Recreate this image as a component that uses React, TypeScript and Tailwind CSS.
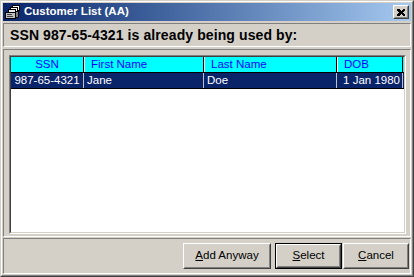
import type { ReactNode } from "react";

const ui = { fontFamily: '"Liberation Sans", Arial, sans-serif' };

type Column = { label: string; width: string; head: string; cell: string };

const columns: Column[] = [
  { label: "SSN", width: "w-[73px]", head: "justify-center", cell: "justify-center" },
  { label: "First Name", width: "w-[120px]", head: "pl-[6px]", cell: "pl-[3px]" },
  { label: "Last Name", width: "w-[133px]", head: "pl-[6px]", cell: "pl-[3px]" },
  { label: "DOB", width: "w-[66px]", head: "pl-[6px]", cell: "justify-end pr-[2px]" },
];

const row = ["987-65-4321", "Jane", "Doe", "1 Jan 1980"];

const CardFileIcon = () => (
  <svg width="16" height="16" viewBox="0 0 16 16" shapeRendering="crispEdges">
    <path d="M7.5 1.5h7v5h-7z" fill="#fff" stroke="#000" />
    <path d="M5.5 3.5h7v5h-7z" fill="#fff" stroke="#000" />
    <path d="M3.5 5.5h7v5h-7z" fill="#e8e8e8" stroke="#000" />
    <path d="M0.5 8.5h10v6h-10z" fill="#c0c0c0" stroke="#000" />
    <path d="M2 10.5h5M2 12.5h6" stroke="#404040" />
    <path d="M10.5 8.5l3-2v6l-3 2" fill="#808080" stroke="#000" />
  </svg>
);

const CloseButton = () => (
  <div className="ml-auto mr-[2px] border border-t-white border-l-white border-r-[#404040] border-b-[#404040]">
    <div className="flex h-[12px] w-[14px] items-center justify-center border border-t-[#d4d0c8] border-l-[#d4d0c8] border-r-[#808080] border-b-[#808080] bg-[#d4d0c8]">
      <svg width="8" height="7" viewBox="0 0 8 7" shapeRendering="crispEdges">
        <path d="M0 0h2l2 2 2-2h2v1l-2 2.5 2 2.5v1h-2l-2-2-2 2h-2v-1l2-2.5-2-2.5z" fill="#000" />
      </svg>
    </div>
  </div>
);

type ButtonProps = { width: string; children: ReactNode; primary?: boolean };

const WinButton = ({ width, children, primary }: ButtonProps) => {
  const face = (
    <div className="h-full border border-t-white border-l-white border-r-[#404040] border-b-[#404040]">
      <div className="flex h-full items-center justify-center border border-t-[#d4d0c8] border-l-[#d4d0c8] border-r-[#808080] border-b-[#808080] text-[11.5px] text-black">
        {children}
      </div>
    </div>
  );
  return (
    <div className={`${width} h-[26px]`}>
      {primary ? <div className="h-full border border-black">{face}</div> : face}
    </div>
  );
};

const Sunken = ({ className, children }: { className: string; children: ReactNode }) => (
  <div className={`border border-t-[#808080] border-l-[#808080] border-r-white border-b-white ${className}`}>
    {children}
  </div>
);

export default function App() {
  return (
    <div className="h-[277px] w-[414px] overflow-hidden bg-[#d4d0c8]" style={ui}>
      <div className="h-full border border-t-[#d4d0c8] border-l-[#d4d0c8] border-r-[#404040] border-b-[#404040]">
        <div className="h-full border border-t-white border-l-white border-r-[#808080] border-b-[#808080] p-[1px]">
          <div className="flex h-full flex-col">
            {/* title bar */}
            <div className="flex h-[18px] items-center bg-linear-to-r from-[#0a246a] to-[#a6caf0] pl-[2px]">
              <CardFileIcon />
              <span className="ml-[3px] text-[11.5px] font-bold text-white">Customer List (AA)</span>
              <CloseButton />
            </div>

            <Sunken className="mt-[2px] flex h-[24px] items-center pl-[6px]">
              <span className="text-[14px] font-bold tracking-[0.1px] text-black">
                SSN 987-65-4321 is already being used by:
              </span>
            </Sunken>

            <Sunken className="mt-[2px] h-[188px] pl-[5px] pr-[4px] pt-[5px]">
              {/* list view */}
              <div className="h-[179px] w-[397px] border border-t-[#808080] border-l-[#808080] border-r-white border-b-white">
                <div className="h-full border border-t-[#404040] border-l-[#404040] border-r-[#d4d0c8] border-b-[#d4d0c8] bg-white">
                  <div className="flex h-[16px] border-b border-black bg-[#00ffff]">
                    {columns.map((c, i) => (
                      <div
                        key={c.label}
                        className={`${c.width} flex items-center border-r border-black text-[11.5px] text-[#0000ff] ${c.head} ${i > 0 ? "border-l border-l-white" : ""}`}
                      >
                        {c.label}
                      </div>
                    ))}
                  </div>
                  <div className="flex h-[16px] border-b border-black bg-[#0a246a]">
                    {columns.map((c, i) => (
                      <div
                        key={c.label}
                        className={`${c.width} flex items-center border-r border-[#c0c0c0] text-[11.5px] text-white ${c.cell}`}
                      >
                        {row[i]}
                      </div>
                    ))}
                  </div>
                </div>
              </div>
            </Sunken>

            <Sunken className="mt-[1px] flex h-[36px] justify-end gap-[4px] pr-[1px] pt-[4px]">
              <WinButton width="w-[88px]">
                <span>
                  <u>A</u>dd Anyway
                </span>
              </WinButton>
              <div className="flex gap-[1px]">
                <WinButton width="w-[67px]" primary>
                  <span>
                    <u>S</u>elect
                  </span>
                </WinButton>
                <WinButton width="w-[66px]">
                  <span>
                    <u>C</u>ancel
                  </span>
                </WinButton>
              </div>
            </Sunken>
          </div>
        </div>
      </div>
    </div>
  );
}
